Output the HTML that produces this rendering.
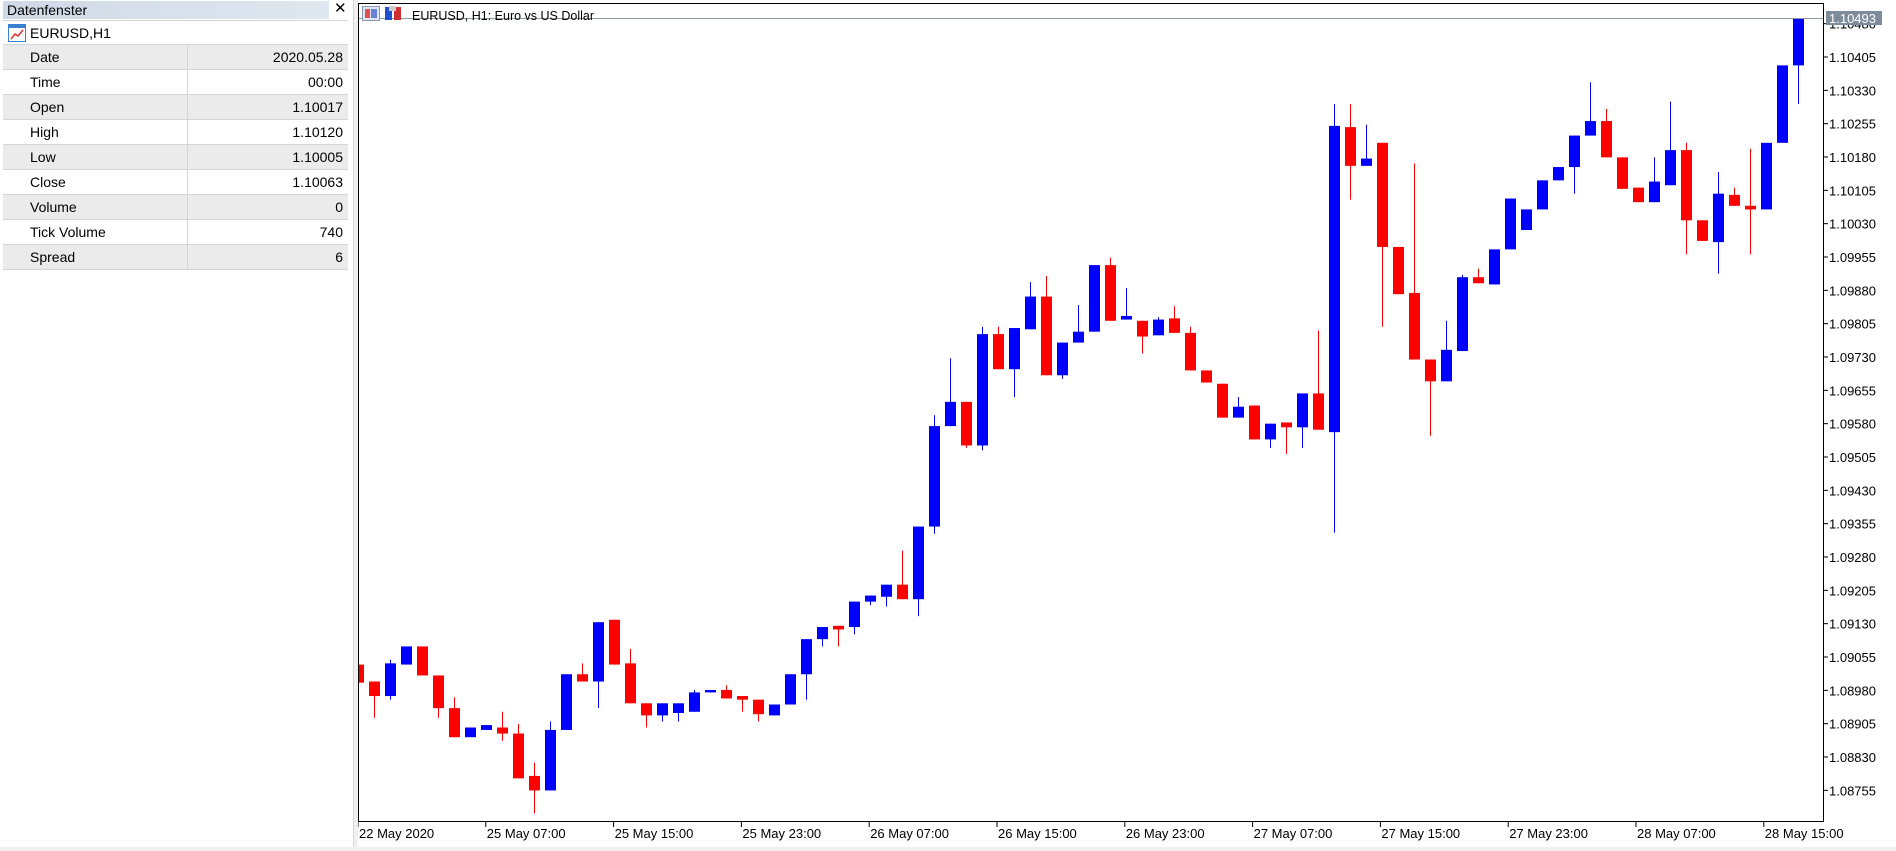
<!DOCTYPE html>
<html><head><meta charset="utf-8"><style>
*{margin:0;padding:0;box-sizing:border-box}
body{width:1896px;height:851px;background:#f0f0f0;position:relative;overflow:hidden;font-family:"Liberation Sans",sans-serif}
#panel{position:absolute;left:0;top:0;width:354px;height:847px;background:#fff;border-right:1px solid #d8d8d8}
#title{position:absolute;left:3px;top:1px;width:326px;height:18px;background:linear-gradient(90deg,#cfd9e6,#dfe7f0);font-size:14px;line-height:18px;padding-left:4px;color:#000}
#close{position:absolute;left:334px;top:0;font-size:15px;line-height:18px}
.row{position:absolute;left:3px;width:345px;height:25px;border-bottom:1px solid #d4d4d4;font-size:14px;line-height:24px}
.row.g{background:#ebebeb}
.row .k{position:absolute;left:27px}
.row .v{position:absolute;right:5px}
.row .d{position:absolute;left:184px;top:0;width:1px;height:24px;background:#d4d4d4}
#chart{position:absolute;left:358px;top:0;width:1538px;height:847px;background:#fff}
</style></head><body>
<div id="panel">
<div id="title">Datenfenster</div><div id="close">✕</div>
<div class="row" style="top:20px;height:25px;border-top:1px solid #d4d4d4"><svg style="position:absolute;left:5px;top:3px" width="18" height="18"><rect x="0.5" y="0.5" width="17" height="17" fill="#fff" stroke="#3a7fd0"/><rect x="1" y="1" width="16" height="3" fill="#3a7fd0"/><polyline points="3,15 7,10 10,12 15,6" fill="none" stroke="#e03030" stroke-width="1.5"/></svg><span class="k" style="left:27px">EURUSD,H1</span></div>
</div>
<div id="chart"><svg id="s" width="1538" height="851" style="position:absolute;left:0;top:0"></svg></div>
<script>
var rows=[["Date","2020.05.28"],["Time","00:00"],["Open","1.10017"],["High","1.10120"],["Low","1.10005"],["Close","1.10063"],["Volume","0"],["Tick Volume","740"],["Spread","6"]];
var p=document.getElementById('panel');
rows.forEach(function(r,i){var d=document.createElement('div');d.className='row'+(i%2==0?' g':'');d.style.top=(45+i*25)+'px';d.innerHTML='<span class="k">'+r[0]+'</span><span class="d"></span><span class="v">'+r[1]+'</span>';p.appendChild(d);});
var C=[["r",549,564],["r",563,575,0,593],["b",548,575,545,578],["b",534,549],["r",534,558],["r",558,585,0,593],["r",585,609,576],["b",601,609,0,592],["b",599,603],["r",601,606,588,612],
["r",606,643,598],["r",641,653,630,672],["b",603,653,596],["b",557,603],["r",557,563,548],["b",514,563,0,585],["r",512,549],["r",548,581,536],["r",581,591,0,601],["b",581,591,0,596],
["b",581,589,0,596],["b",572,588,570],["b",570,572],["r",570,577,566],["r",575,578,0,588],["r",578,590,0,596],["b",582,591],["b",557,582],["b",528,557,0,578],["b",518,528,0,534],
["r",517,520,0,534],["b",497,518,0,524],["b",492,497,0,500],["b",483,493,0,501],["r",483,495,455],["b",435,495,0,509],["b",352,435,343,441],["b",332,352,296],["r",332,368,0,370],["b",276,368,270,372],
["r",276,305,270],["b",271,305,0,328],["b",245,272,233],["r",245,310,228],["b",283,310,0,313],["b",274,283,252],["b",219,274],["r",219,265,213],["b",261,264,238],["r",265,278,0,292],
["b",264,277,262],["r",263,275,253],["r",275,306,270],["r",306,316],["r",317,345],["b",336,345,328],["r",335,363],["b",350,363,0,370],["r",349,353,0,375],["b",325,353,0,370],
["r",325,355,273],["b",104,357,86,440],["r",105,137,86,165],["b",131,137,103],["r",118,204,0,270],["r",204,243],["r",242,297,135],["r",297,315,0,360],["b",289,315,265],["b",229,290,227],
["r",229,234,222],["b",206,235],["b",164,206,0,185],["b",173,190],["b",149,173],["b",138,149],["b",112,138,0,160],["b",100,112,68],["r",100,130,90],["r",130,156],
["r",155,167],["b",150,167,130],["b",124,153,84],["r",124,182,118,210],["r",182,199],["b",160,200,142,226],["r",161,170,155],["r",170,173,123,210],["b",118,173],["b",54,118,0,87],["b",15,54,0,86]];
var ys=1.2105,h='';
h+='<defs><clipPath id="cp"><rect x="1" y="4" width="1464" height="817"/></clipPath></defs><g clip-path="url(#cp)">';
C.forEach(function(c,i){var x=16*i,col=c[0]=='r'?'#ff0000':'#0000ff';var t=c[1]*ys,b=c[2]*ys;var wt=(c[3]||c[1])*ys,wb=(c[4]||c[2])*ys;
h+='<rect x="'+(x)+'" y="'+wt+'" width="1" height="'+(wb-wt)+'" fill="'+col+'"/>';
h+='<rect x="'+(x-5)+'" y="'+t+'" width="11" height="'+Math.max(2,b-t)+'" fill="'+col+'"/>';});
h+='</g>';
h+='<line x1="1" y1="18.5" x2="1465" y2="18.5" stroke="#8a9aa8"/>';
h+='<rect x="0.5" y="3.5" width="1465" height="818" fill="none" stroke="#000"/>';
for(var k=0;k<24;k++){var pr=1.10480-0.00075*k;var y=57+(1.10405-pr)*44444;if(y>815)break;
h+='<line x1="1465" y1="'+y+'" x2="1470" y2="'+y+'" stroke="#000"/>';
h+='<text x="1471" y="'+(y+5)+'" font-size="13" font-family="Liberation Sans">'+pr.toFixed(5)+'</text>';}
h+='<rect x="1468" y="11" width="56" height="14" fill="#7d8c9b"/><text x="1471" y="23" font-size="13" fill="#fff" font-family="Liberation Sans">1.10493</text>';
var L=["22 May 2020","25 May 07:00","25 May 15:00","25 May 23:00","26 May 07:00","26 May 15:00","26 May 23:00","27 May 07:00","27 May 15:00","27 May 23:00","28 May 07:00","28 May 15:00"];
L.forEach(function(l,i){var x=i*127.8;h+='<line x1="'+x+'" y1="822" x2="'+x+'" y2="827" stroke="#000"/><text x="'+(x+1)+'" y="838" font-size="13" font-family="Liberation Sans">'+l+'</text>';});
h+='<rect x="4.5" y="6.5" width="17" height="14" fill="#dde6f2" stroke="#8899aa"/><rect x="7" y="9" width="5" height="9" fill="#e05050"/><rect x="13" y="9" width="6" height="9" fill="#6a80d8"/>';
h+='<rect x="27" y="7" width="7" height="13" fill="#2050d0"/><rect x="36" y="7" width="7" height="13" fill="#d03030"/><rect x="31" y="6" width="7" height="5" fill="#ccc"/>';
h+='<text x="54" y="20" font-size="12.5" font-family="Liberation Sans">EURUSD, H1:  Euro vs US Dollar</text>';
document.getElementById('s').innerHTML=h;
</script>
</body></html>
